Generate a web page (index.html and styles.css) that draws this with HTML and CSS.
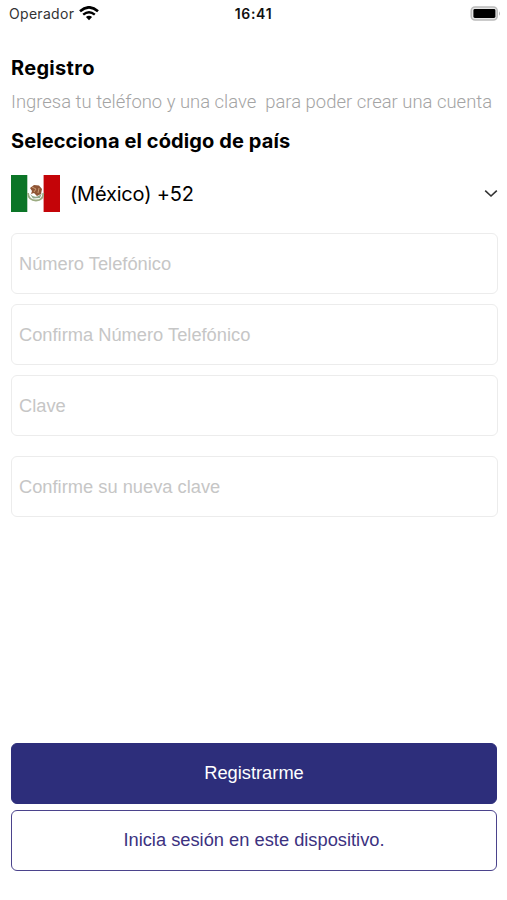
FILE: index.html
```
<!DOCTYPE html>
<html lang="es">
<head>
  <meta charset="UTF-8">
  <title>Registro</title>
  <link rel="stylesheet" href="styles.css">
</head>
<body>
<div class="screen">
  <div class="status-bar">
    <div class="carrier">
      <span class="operator">Operador</span>
      <svg class="wifi" width="20" height="15" viewBox="0 0 20 15">
        <path d="M1 5.2 Q10 -2.6 19 5.2" fill="none" stroke="#000" stroke-width="2.6"/>
        <path d="M4.2 8.6 Q10 3.7 15.8 8.6" fill="none" stroke="#000" stroke-width="2.4"/>
        <path d="M6.9 11 Q10 8.3 13.1 11 L10 14.2 Z" fill="#000"/>
      </svg>
    </div>
    <div class="time">16:41</div>
    <svg class="battery" width="31" height="16" viewBox="0 0 31 16">
      <rect x="1.2" y="1" width="26" height="13" rx="3.8" fill="#e6e6e6" stroke="#bbb" stroke-width="1.5"/>
      <rect x="3.4" y="3" width="22" height="9" rx="1.4" fill="#000"/>
      <path d="M29 5.2 Q31 7.5 29 9.8 Z" fill="#b5b5b5"/>
    </svg>
  </div>

  <form class="form">
    <h1 class="title">Registro</h1>
    <p class="subtitle">Ingresa tu teléfono y una clave&nbsp; para poder crear una cuenta</p>
    <h2 class="title country-title">Selecciona el código de país</h2>

    <div class="country">
      <svg class="flag" width="49" height="37" viewBox="0 0 49 37">
        <rect width="49" height="37" fill="#fff"/>
        <rect width="16.3" height="37" fill="#0b7527"/>
        <rect x="32.6" width="16.4" height="37" fill="#c40408"/>
        <path d="M17 18 Q17.5 25.5 25 25.5 Q32.3 25.5 32.3 18" fill="none" stroke="#9cab82" stroke-width="1.8"/>
        <path d="M19 19 Q25 25 31 18 L29 23 L22 23.5 Z" fill="#91a88b"/>
        <path d="M19 13 L23 10 L28 10.5 L31 14 L30 19 L26 21 L23 18 L20 19 L21 16 Z" fill="#8f5535"/>
        <path d="M21 12 L25 14 L23 17 M28 13 L27 18" fill="none" stroke="#c79a73" stroke-width="1"/>
      </svg>
      <span class="country-name">(México) +52</span>
      <svg class="chevron" width="14" height="9" viewBox="0 0 14 9">
        <path d="M1.2 1.6 L7 7 L12.8 1.6" fill="none" stroke="#333" stroke-width="1.6"/>
      </svg>
    </div>

    <input class="field phone" type="tel" placeholder="Número Telefónico">
    <input class="field phone-confirm" type="tel" placeholder="Confirma Número Telefónico">
    <input class="field key" type="password" placeholder="Clave">
    <input class="field key-confirm" type="password" placeholder="Confirme su nueva clave">

    <div class="actions">
      <button class="btn primary" type="button">Registrarme</button>
      <button class="btn secondary" type="button">Inicia sesión en este dispositivo.</button>
    </div>
  </form>
</div>
</body>
</html>
```
FILE: styles.css
```
* {
  box-sizing: border-box;
}

body {
  margin: 0;
  background: #fff;
  color: #000;
  font-family: Inter, "Liberation Sans", sans-serif;
}

.screen {
  display: flex;
  flex-direction: column;
  width: 507px;
  height: 900px;
}

.status-bar {
  display: grid;
  grid-template-columns: 1fr auto 1fr;
  align-items: center;
  height: 27px;
  padding: 0 6px 0 9px;
  font-size: 14px;
}

.carrier {
  display: flex;
  align-items: center;
  gap: 5px;
}

.operator {
  color: #333;
  letter-spacing: 0.3px;
}

.time {
  margin-right: 3px;
  color: #111;
  font-weight: 600;
  letter-spacing: 0.7px;
}

.battery {
  justify-self: end;
}

.form {
  display: flex;
  flex: 1;
  flex-direction: column;
  padding: 28px 10px 29px 11px;
}

.title {
  margin: 0;
  font-size: 20px;
  font-weight: 700;
  letter-spacing: 0.3px;
  line-height: 27px;
}

.country-title {
  letter-spacing: 0.1px;
  line-height: 28px;
}

.subtitle {
  margin: 7px 0 11px;
  color: #a4a4a4;
  font-family: Roboto, sans-serif;
  font-size: 18.45px;
  font-weight: 300;
  line-height: 27px;
  white-space: nowrap;
}

.country {
  display: flex;
  align-items: center;
  height: 37px;
  margin: 20px -1px 21px 0;
}

.country-name {
  flex: 1;
  margin-left: 10px;
  font-size: 20px;
  letter-spacing: -0.2px;
}

.field {
  width: 487px;
  height: 61px;
  padding: 0 7px;
  border: 1px solid #ececec;
  border-radius: 6px;
  background: #fff;
  font-family: "Liberation Sans", sans-serif;
  font-size: 18.3px;
}

.field::placeholder {
  color: #c6c6c6;
}

.phone,
.phone-confirm {
  margin-bottom: 10px;
}

.key {
  margin-bottom: 20px;
}

.actions {
  display: flex;
  flex-direction: column;
  gap: 6px;
  margin-top: auto;
}

.btn {
  width: 486px;
  height: 61px;
  padding: 0 0 2px;
  border: 1px solid #2d2e7b;
  border-radius: 6px;
  font-family: "Liberation Sans", sans-serif;
  font-size: 18.3px;
}

.primary {
  background: #2d2e7b;
  color: #fff;
}

.secondary {
  border-color: #4b438c;
  background: #fff;
  color: #3c327f;
}
```
